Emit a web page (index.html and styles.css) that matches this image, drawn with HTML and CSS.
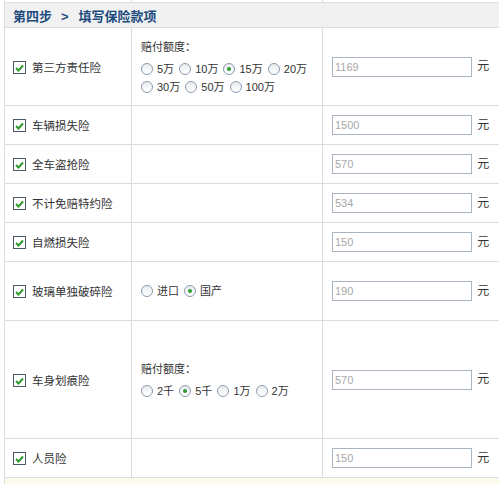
FILE: index.html
```html
<!DOCTYPE html>
<html lang="zh-CN">
<head>
    <meta charset="UTF-8">
    <title>填写保险款项</title>
    <link rel="stylesheet" href="styles.css">
</head>
<body>
    <table class="form">
        <colgroup>
            <col class="c1"><col class="c2"><col class="c3">
        </colgroup>
        <tr class="prev"><td></td><td></td><td></td></tr>
        <tr class="step">
            <th colspan="3">第四步<span class="sep">&gt;</span>填写保险款项</th>
        </tr>
        <tr class="h78">
            <td class="name"><span class="chk"><svg width="9" height="8" viewBox="0 0 9 8"><path d="M1 4l2.5 2.5L8 1.5" fill="none" stroke="#2e9a2e" stroke-width="2"/></svg></span>第三方责任险</td>
            <td class="opts">
                <div class="cap">赔付额度：</div>
                <div class="line">
                    <span class="radio"></span>5万
                    <span class="radio"></span>10万
                    <span class="radio on"></span>15万
                    <span class="radio"></span>20万
                </div>
                <div class="line">
                    <span class="radio"></span>30万
                    <span class="radio"></span>50万
                    <span class="radio"></span>100万
                </div>
            </td>
            <td class="price"><input type="text" value="1169"> 元</td>
        </tr>
        <tr class="h39">
            <td class="name"><span class="chk"><svg width="9" height="8" viewBox="0 0 9 8"><path d="M1 4l2.5 2.5L8 1.5" fill="none" stroke="#2e9a2e" stroke-width="2"/></svg></span>车辆损失险</td>
            <td></td>
            <td class="price"><input type="text" value="1500"> 元</td>
        </tr>
        <tr class="h39">
            <td class="name"><span class="chk"><svg width="9" height="8" viewBox="0 0 9 8"><path d="M1 4l2.5 2.5L8 1.5" fill="none" stroke="#2e9a2e" stroke-width="2"/></svg></span>全车盗抢险</td>
            <td></td>
            <td class="price"><input type="text" value="570"> 元</td>
        </tr>
        <tr class="h39">
            <td class="name"><span class="chk"><svg width="9" height="8" viewBox="0 0 9 8"><path d="M1 4l2.5 2.5L8 1.5" fill="none" stroke="#2e9a2e" stroke-width="2"/></svg></span>不计免赔特约险</td>
            <td></td>
            <td class="price"><input type="text" value="534"> 元</td>
        </tr>
        <tr class="h39">
            <td class="name"><span class="chk"><svg width="9" height="8" viewBox="0 0 9 8"><path d="M1 4l2.5 2.5L8 1.5" fill="none" stroke="#2e9a2e" stroke-width="2"/></svg></span>自燃损失险</td>
            <td></td>
            <td class="price"><input type="text" value="150"> 元</td>
        </tr>
        <tr class="h59">
            <td class="name"><span class="chk"><svg width="9" height="8" viewBox="0 0 9 8"><path d="M1 4l2.5 2.5L8 1.5" fill="none" stroke="#2e9a2e" stroke-width="2"/></svg></span>玻璃单独破碎险</td>
            <td class="opts">
                <div class="line">
                    <span class="radio"></span>进口
                    <span class="radio on"></span>国产
                </div>
            </td>
            <td class="price"><input type="text" value="190"> 元</td>
        </tr>
        <tr class="h118">
            <td class="name"><span class="chk"><svg width="9" height="8" viewBox="0 0 9 8"><path d="M1 4l2.5 2.5L8 1.5" fill="none" stroke="#2e9a2e" stroke-width="2"/></svg></span>车身划痕险</td>
            <td class="opts">
                <div class="cap">赔付额度：</div>
                <div class="line">
                    <span class="radio"></span>2千
                    <span class="radio on"></span>5千
                    <span class="radio"></span>1万
                    <span class="radio"></span>2万
                </div>
            </td>
            <td class="price"><input type="text" value="570"> 元</td>
        </tr>
        <tr class="h39">
            <td class="name"><span class="chk"><svg width="9" height="8" viewBox="0 0 9 8"><path d="M1 4l2.5 2.5L8 1.5" fill="none" stroke="#2e9a2e" stroke-width="2"/></svg></span>人员险</td>
            <td></td>
            <td class="price"><input type="text" value="150"> 元</td>
        </tr>
        <tr class="foot"><td colspan="3"></td></tr>
    </table>
</body>
</html>
```

FILE: styles.css
```css
body {
    margin: 0;
    padding: 0;
    overflow: hidden;
    background: #fff;
    font-family: "Liberation Sans", "Noto Sans CJK SC", sans-serif;
    font-size: 11px;
    color: #333;
}
.form {
    border-collapse: collapse;
    margin-left: 4px;
    width: 540px;
    table-layout: fixed;
}
.c1 { width: 127px; }
.c2 { width: 191px; }
.form td {
    border: 1px solid #dcdcdc;
    padding: 0;
    vertical-align: middle;
}
.prev td {
    height: 2px;
    border-top: none;
}
.step th {
    height: 24px;
    background: #f1f1f1;
    border: 1px solid #dcdcdc;
    text-align: left;
    padding: 0 0 0 8px;
    font-size: 13px;
    font-weight: bold;
    color: #1d4b7e;
}
.sep {
    margin: 0 10px 0 9px;
}
.h39 td { height: 38px; }
.h59 td { height: 58px; }
.h78 td { height: 77px; }
.h118 td { height: 117px; }
.name {
    padding-left: 8px !important;
    white-space: nowrap;
    font-size: 11.5px;
}
.chk {
    display: inline-block;
    width: 11px;
    height: 11px;
    border: 1px solid #4a5a6a;
    background: #fff;
    vertical-align: -2px;
    margin-right: 6px;
}
.chk svg {
    display: block;
    margin: 2px 0 0 1px;
}
.opts {
    padding-left: 9px !important;
}
.cap {
    line-height: 18px;
    margin-bottom: 4px;
}
.line {
    line-height: 18px;
    white-space: nowrap;
}
.radio {
    display: inline-block;
    width: 10px;
    height: 10px;
    border: 1px solid #8c9cae;
    border-radius: 50%;
    background: linear-gradient(#e8ecf0, #ffffff);
    vertical-align: -2px;
    margin-right: 4px;
    position: relative;
}
.line .radio ~ .radio {
    margin-left: 2px;
}
.radio.on::after {
    content: "";
    position: absolute;
    left: 3px;
    top: 3px;
    width: 4px;
    height: 4px;
    border-radius: 50%;
    background: #2e9a2e;
}
.price {
    padding-left: 9px !important;
    white-space: nowrap;
    font-size: 12px;
}
.price input {
    box-sizing: border-box;
    width: 140px;
    height: 20px;
    border: 1px solid #a9b6c2;
    padding: 0 2px;
    font-family: "Liberation Sans", sans-serif;
    font-size: 11px;
    color: #a8a8a8;
    vertical-align: middle;
    margin: 0 2px 0 0;
}
.foot td {
    height: 10px;
    background: #fcfbee;
    border-bottom: none;
}
```
